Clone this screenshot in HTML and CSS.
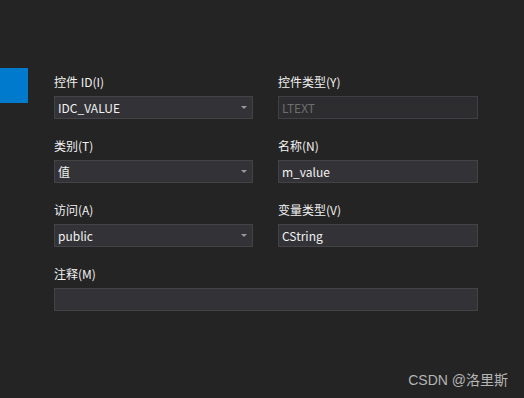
FILE: index.html
```html
<!DOCTYPE html>
<html>
<head>
<meta charset="utf-8">
<link rel="stylesheet" href="styles.css">
</head>
<body>
<div class="page">
  <div class="side"><div class="accent"></div></div>
  <div class="form">
    <div class="field">
      <div class="label">控件 ID(I)</div>
      <div class="input select"><span>IDC_VALUE</span><i class="arrow"></i></div>
    </div>
    <div class="field">
      <div class="label">控件类型(Y)</div>
      <div class="input disabled"><span>LTEXT</span></div>
    </div>
    <div class="field">
      <div class="label">类别(T)</div>
      <div class="input select"><span>值</span><i class="arrow"></i></div>
    </div>
    <div class="field">
      <div class="label">名称(N)</div>
      <div class="input"><span>m_value</span></div>
    </div>
    <div class="field">
      <div class="label">访问(A)</div>
      <div class="input select"><span>public</span><i class="arrow"></i></div>
    </div>
    <div class="field">
      <div class="label">变量类型(V)</div>
      <div class="input"><span>CString</span></div>
    </div>
    <div class="field wide">
      <div class="label">注释(M)</div>
      <div class="input"></div>
    </div>
  </div>
</div>
<div class="watermark">CSDN @洛里斯</div>
</body>
</html>
```
FILE: styles.css
```css
html, body {
  margin: 0;
  padding: 0;
  background: #242424;
  width: 524px;
  height: 398px;
  overflow: hidden;
  font-family: "Noto Sans CJK SC", "Noto Sans", sans-serif;
  color: #f1f1f1;
}
.page {
  display: flex;
  height: 398px;
}
.side {
  width: 28px;
  padding-top: 68px;
}
.accent {
  width: 28px;
  height: 35px;
  background: #007acc;
}
.form {
  margin-left: 26px;
  padding-top: 73px;
  display: grid;
  grid-template-columns: 199px 200px;
  column-gap: 25px;
  row-gap: 18px;
  align-content: start;
}
.field.wide {
  grid-column: 1 / 3;
}
.label {
  font-size: 12px;
  line-height: 18px;
  height: 18px;
  margin-bottom: 5px;
  color: #f1f1f1;
}
.input {
  box-sizing: border-box;
  height: 23px;
  background: #333337;
  border: 1px solid #434346;
  display: flex;
  align-items: center;
  padding: 0 4px 0 3px;
  font-size: 12px;
  line-height: 21px;
  color: #f1f1f1;
  position: relative;
}
.input.disabled {
  background: #2d2d30;
  border-color: #3f3f46;
  color: #6d6d6d;
}
.input span {
  flex: 1;
}
.arrow {
  width: 0;
  height: 0;
  border-left: 3px solid transparent;
  border-right: 3px solid transparent;
  border-top: 3px solid #999999;
  margin-right: 1px;
}
.watermark {
  position: absolute;
  right: 16px;
  top: 370px;
  font-family: "Liberation Sans", "Noto Sans CJK SC", sans-serif;
  font-size: 14px;
  line-height: 20px;
  color: #b4b4b4;
}
```
